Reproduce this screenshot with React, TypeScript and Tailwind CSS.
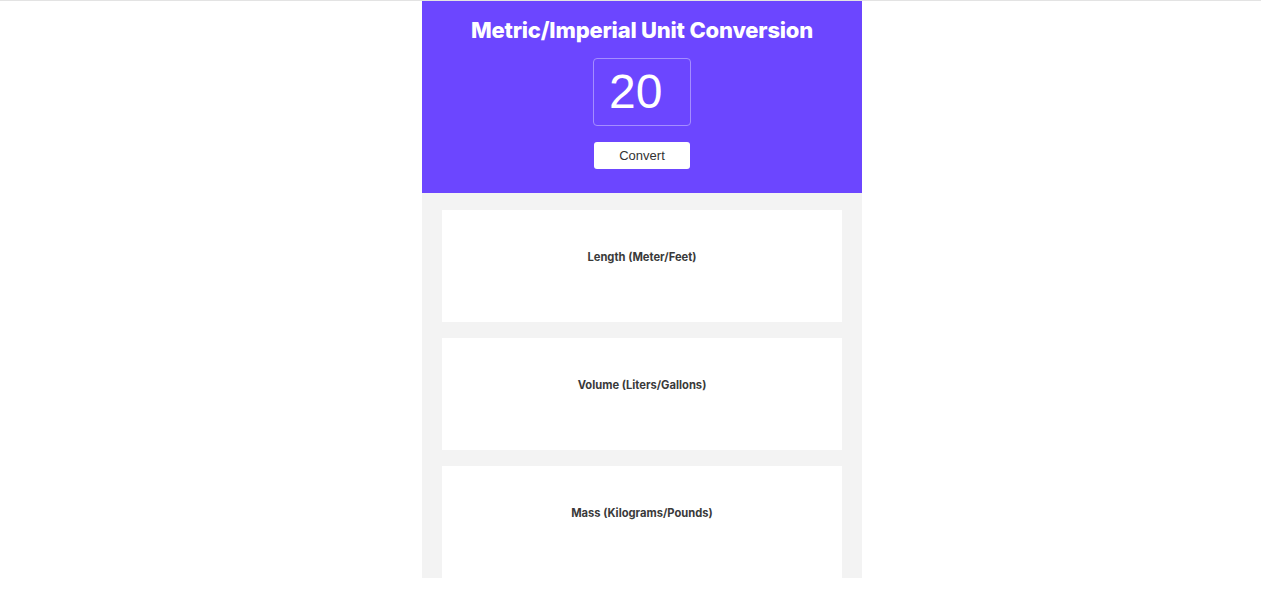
export default function App() {
  const categories = ["Length (Meter/Feet)", "Volume (Liters/Gallons)", "Mass (Kilograms/Pounds)"]

  return (
    <div className="min-h-[603px] border-t border-[#e3e3e3] bg-white">
      <div className="flex justify-center pl-[23px]">
        <div className="w-[440px]">
          {/* Header */}
          <div className="flex h-[192px] flex-col items-center bg-[#6c46ff] pt-[15px]">
            <h1 className="font-['Inter',sans-serif] text-[22px] font-extrabold leading-[28px] tracking-[-0.2px] text-white">
              Metric/Imperial Unit Conversion
            </h1>
            <div className="mt-[14px] flex h-[68px] w-[98px] items-center rounded-[4px] border border-[#a58dff] pl-[15px] font-['Liberation_Sans',sans-serif] text-[48px] leading-none text-white">
              20
            </div>
            <button className="mt-[16px] h-[27px] w-[96px] rounded-[3px] bg-white font-['Liberation_Sans',sans-serif] text-[13px] text-[#333]">
              Convert
            </button>
          </div>

          {/* Results */}
          <div className="flex flex-col gap-[16px] bg-[#f3f3f3] px-[20px] pt-[17px]">
            {categories.map((name, i) => (
              <div key={i} className="h-[112px] bg-white pt-[40px] text-center">
                <h2 className="font-['Inter',sans-serif] text-[11.2px] font-bold leading-[14px] text-[#3a3a3a]">{name}</h2>
              </div>
            ))}
          </div>
        </div>
      </div>
    </div>
  )
}
